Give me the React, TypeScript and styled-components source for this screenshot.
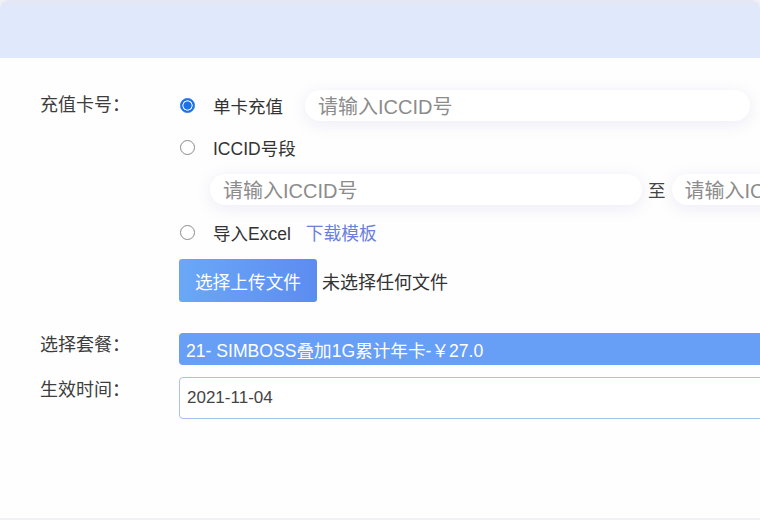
import styled, { createGlobalStyle } from "styled-components";

const GlobalStyle = createGlobalStyle`
  html, body {
    margin: 0;
    padding: 0;
    background: #f1f1f3;
    overflow: hidden;
  }
  body {
    font-family: "Liberation Sans", "Noto Sans CJK SC", sans-serif;
  }
`;

const Card = styled.div`
  width: 760px;
  height: 518px;
  background: #fefefe;
  border-radius: 8px 8px 0 0;
  overflow: hidden;
`;

const Header = styled.div`
  height: 58px;
  background: linear-gradient(#e6e7f5 0, #e2e8f8 6px, #dfe9fb 7px);
`;

const Form = styled.div`
  display: flex;
  flex-direction: column;
  padding: 32px 0 0 40px;
`;

const FormRow = styled.div<{ $mt?: number }>`
  display: grid;
  grid-template-columns: 139px 1fr;
  margin-top: ${({ $mt }) => $mt ?? 0}px;
`;

const Label = styled.div<{ $pt?: number }>`
  font-size: 18px;
  line-height: 24px;
  color: #3d3d3d;
  padding-top: ${({ $pt }) => $pt ?? 2}px;
  white-space: nowrap;
`;

const Field = styled.div`
  display: flex;
  flex-direction: column;
  gap: 12px;
  min-width: 0;
`;

const Line = styled.div<{ $h?: number; $indent?: number }>`
  display: flex;
  align-items: center;
  height: ${({ $h }) => $h ?? 30}px;
  padding-left: ${({ $indent }) => $indent ?? 0}px;
  white-space: nowrap;
`;

const Radio = styled.span<{ $checked?: boolean }>`
  box-sizing: border-box;
  flex: none;
  width: 15px;
  height: 15px;
  margin-left: 1px;
  margin-right: 18px;
  border-radius: 50%;
  border: 1.5px solid ${({ $checked }) => ($checked ? "#1a73e8" : "#8a8a8a")};
  background: ${({ $checked }) =>
    $checked
      ? "radial-gradient(circle, #1a73e8 0 3.8px, #fff 4.4px 4.8px, #1a73e8 5.4px)"
      : "#fff"};
`;

const Text = styled.span<{ $ml?: number; $size?: number }>`
  font-size: ${({ $size }) => $size ?? 17.5}px;
  color: #333;
  margin-left: ${({ $ml }) => $ml ?? 0}px;
`;

const Link = styled.a`
  font-size: 17.75px;
  color: #6b80dc;
  margin-left: 15px;
  text-decoration: none;
`;

const PillInput = styled.div<{ $w: number; $ml?: number }>`
  box-sizing: border-box;
  flex: none;
  display: flex;
  align-items: center;
  width: ${({ $w }) => $w}px;
  height: 31px;
  margin-left: ${({ $ml }) => $ml ?? 0}px;
  padding-left: 13px;
  border-radius: 16px;
  background: #fff;
  box-shadow: 0 3px 16px rgba(110, 110, 190, 0.13);
  font-size: 20px;
  color: #8c8c8c;
`;

const To = styled.span`
  font-size: 17.5px;
  color: #444;
  margin: 0 6px;
`;

const UploadButton = styled.button`
  flex: none;
  width: 138px;
  height: 43px;
  border: none;
  border-radius: 3px;
  background: linear-gradient(90deg, #6aa8f7, #5d8cf0);
  color: #fff;
  font-family: inherit;
  font-size: 17.7px;
`;

const Select = styled.div`
  box-sizing: border-box;
  display: flex;
  align-items: center;
  width: 640px;
  height: 32px;
  padding-left: 7px;
  border-radius: 4px;
  background: #679ef6;
  color: #fff;
  font-size: 17.6px;
  white-space: nowrap;
`;

const DateInput = styled.div`
  box-sizing: border-box;
  display: flex;
  align-items: center;
  width: 640px;
  height: 42px;
  padding-left: 7px;
  border: 1px solid #a9c1ef;
  border-radius: 4px;
  background: #fff;
  color: #444;
  font-size: 17px;
`;

export default function App() {
  return (
    <>
      <GlobalStyle />
      <Card>
        <Header />
        <Form>
          <FormRow>
            <Label $pt={3}>充值卡号：</Label>
            <Field>
              <Line>
                <Radio $checked />
                <Text>单卡充值</Text>
                <PillInput $w={445} $ml={22}>请输入ICCID号</PillInput>
              </Line>
              <Line>
                <Radio />
                <Text>ICCID号段</Text>
              </Line>
              <Line $h={31} $indent={31}>
                <PillInput $w={432}>请输入ICCID号</PillInput>
                <To>至</To>
                <PillInput $w={432}>请输入ICCID号</PillInput>
              </Line>
              <Line>
                <Radio />
                <Text>导入Excel</Text>
                <Link>下载模板</Link>
              </Line>
              <Line $h={43}>
                <UploadButton>选择上传文件</UploadButton>
                <Text $ml={5} $size={18}>未选择任何文件</Text>
              </Line>
            </Field>
          </FormRow>
          <FormRow $mt={31}>
            <Label $pt={0}>选择套餐：</Label>
            <Select>21- SIMBOSS叠加1G累计年卡-￥27.0</Select>
          </FormRow>
          <FormRow $mt={12}>
            <Label $pt={1}>生效时间：</Label>
            <DateInput>2021-11-04</DateInput>
          </FormRow>
        </Form>
      </Card>
    </>
  );
}
